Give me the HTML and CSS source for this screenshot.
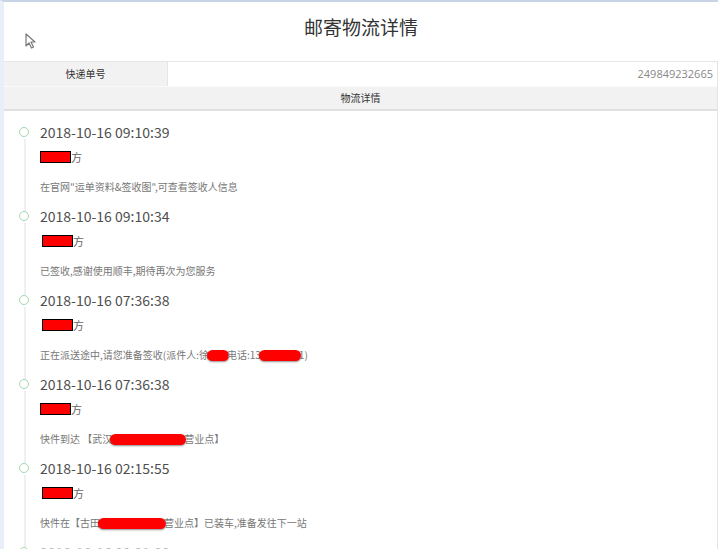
FILE: index.html
```html
<!DOCTYPE html>
<html>
<head>
  <meta charset="utf-8">
  <title>邮寄物流详情</title>
  <link rel="stylesheet" href="styles.css">
</head>
<body>
  <div class="frame">
    <div class="header">
      <h1>邮寄物流详情</h1>
      <svg class="cursor" width="12" height="16" viewBox="0 0 12 16">
        <path d="M1 1 L1 13 L4 10 L6.5 15 L8.5 14 L6 9 L10 9 Z" fill="#fff" stroke="#777" stroke-width="1.2" stroke-linejoin="round"/>
      </svg>
    </div>

    <div class="panel">
      <div class="row">
        <div class="label">快递单号</div>
        <div class="value">249849232665</div>
      </div>
      <div class="row sub">物流详情</div>

      <ul class="timeline">
        <li class="item">
          <div class="time">2018-10-16 09:10:39</div>
          <div class="place"><span class="mask"></span>方</div>
          <div class="desc">在官网"运单资料&amp;签收图",可查看签收人信息</div>
        </li>
        <li class="item">
          <div class="time">2018-10-16 09:10:34</div>
          <div class="place shift"><span class="mask"></span>方</div>
          <div class="desc">已签收,感谢使用顺丰,期待再次为您服务</div>
        </li>
        <li class="item">
          <div class="time">2018-10-16 07:36:38</div>
          <div class="place shift"><span class="mask"></span>方</div>
          <div class="desc">正在派送途中,请您准备签收(派件人:徐<span class="blot w20"></span>电话:13<span class="blot w40"></span>1)</div>
        </li>
        <li class="item">
          <div class="time">2018-10-16 07:36:38</div>
          <div class="place"><span class="mask"></span>方</div>
          <div class="desc">快件到达 【武汉<span class="blot w74"></span>营业点】</div>
        </li>
        <li class="item">
          <div class="time">2018-10-16 02:15:55</div>
          <div class="place shift"><span class="mask"></span>方</div>
          <div class="desc">快件在【古田<span class="blot w66"></span>营业点】已装车,准备发往下一站</div>
        </li>
        <li class="item last">
          <div class="time">2018-10-16 00:21:08</div>
        </li>
      </ul>
    </div>
  </div>
</body>
</html>
```

FILE: styles.css
```css
body {
  margin: 0;
  padding: 0;
  background-color: #fff;
  font-family: "Liberation Sans", "Noto Sans CJK SC", sans-serif;
  color: #333;
}
.frame {
  border-top: 2px solid #c6d4e6;
  border-left: 4px solid #e8eff8;
  margin-right: 6px;
  height: 547px;
  overflow: hidden;
}
.header {
  position: relative;
  height: 59px;
  text-align: center;
}
.header h1 {
  margin: 0;
  padding-top: 13px;
  font-family: "Noto Sans CJK SC", sans-serif;
  font-size: 19px;
  font-weight: normal;
  line-height: 24px;
  color: #333;
}
.cursor {
  position: absolute;
  left: 21px;
  top: 31px;
}
.panel {
  border-right: 1px solid #e4e4e4;
}
.row {
  display: flex;
  height: 24px;
  font-family: "Noto Sans CJK SC", sans-serif;
  font-size: 10px;
  line-height: 24px;
  border-top: 1px solid #e6e6e6;
}
.label {
  width: 163px;
  text-align: center;
  background-color: #f2f2f2;
  color: #333;
}
.value {
  flex: 1;
  text-align: right;
  padding-right: 4px;
  background-color: #fff;
  border-left: 1px solid #e6e6e6;
  font-family: "Open Sans", sans-serif;
  font-size: 11px;
  color: #888;
}
.row.sub {
  justify-content: center;
  height: 22px;
  line-height: 22px;
  background-color: #f2f2f2;
  border-top: 1px solid #fafafa;
  border-bottom: 2px solid #e0e0e0;
}
.timeline {
  list-style: none;
  margin: 0;
  padding: 11px 0 0 0;
}
.item {
  position: relative;
  height: 84px;
  padding-left: 36px;
}
.item::before {
  content: "";
  position: absolute;
  left: 15px;
  top: 5px;
  width: 8px;
  height: 8px;
  border: 1.5px solid #a3d7ad;
  border-radius: 50%;
  background-color: #fff;
  z-index: 1;
}
.item::after {
  content: "";
  position: absolute;
  left: 20px;
  top: 17px;
  width: 2px;
  height: 72px;
  background-color: #f0f0f0;
}
.time {
  font-family: "Noto Sans CJK SC", sans-serif;
  font-size: 14px;
  line-height: 20px;
  color: #4f4f4f;
}
.item.last .time {
  color: #bbb;
}
.place {
  margin-top: 7px;
  height: 16px;
  font-family: "Noto Sans CJK SC", sans-serif;
  font-size: 11px;
  line-height: 16px;
  color: #666;
}
.place.shift .mask {
  margin-left: 2px;
}
.mask {
  display: inline-block;
  width: 29px;
  height: 10px;
  background-color: #f00;
  border: 1px solid #000;
  vertical-align: -1px;
}
.desc {
  margin-top: 15px;
  font-family: "Noto Sans CJK SC", sans-serif;
  font-size: 10px;
  line-height: 14px;
  color: #777;
  white-space: nowrap;
}
.blot {
  display: inline-block;
  height: 11px;
  margin: 0 -2px;
  background-color: #f00;
  border-radius: 6px;
  box-shadow: 0 1px 2px rgba(0, 0, 0, 0.45);
  vertical-align: -2px;
}
.w20 { width: 22px; }
.w40 { width: 42px; }
.w66 { width: 68px; }
.w74 { width: 76px; }
```
